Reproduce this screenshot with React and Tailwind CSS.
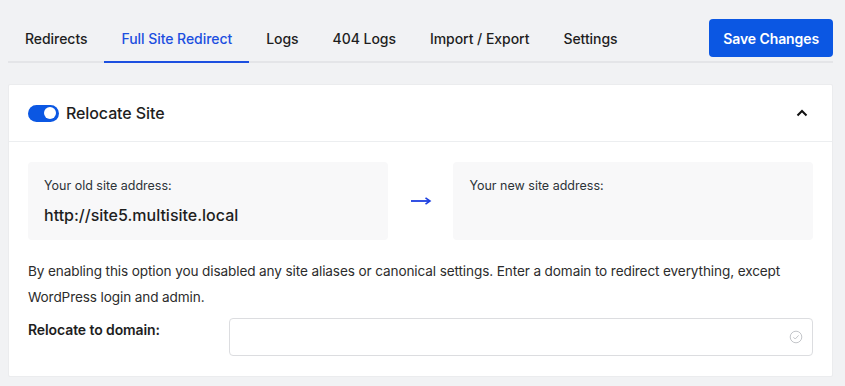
import { useState } from 'react';

const tabs = ['Redirects', 'Full Site Redirect', 'Logs', '404 Logs', 'Import / Export', 'Settings'];

function Toggle({ on, onChange }) {
    return (
        <button
            onClick={() => onChange(!on)}
            className={`relative w-[31px] h-[17px] rounded-full flex items-center px-[3px] ${on ? 'bg-[#0b57e3] justify-end' : 'bg-gray-300 justify-start'}`}
        >
            <span className="w-[12px] h-[12px] rounded-full bg-white" />
        </button>
    );
}

export default function App() {
    const [active, setActive] = useState(1);
    const [on, setOn] = useState(true);

    return (
        <div className="w-[845px] h-[386px] bg-[#f1f2f4] px-[8px] pt-[16px] overflow-hidden" style={{ fontFamily: 'Inter, "Noto Sans", sans-serif' }}>
            {/* Tabs + save */}
            <div className="flex items-start justify-between border-b-2 border-[#e4e5e8] w-[825px]">
                <div className="flex">
                    {tabs.map((t, i) => (
                        <button
                            key={t}
                            onClick={() => setActive(i)}
                            className={`px-[17px] h-[47px] -mb-[2px] flex items-center text-[14px] tracking-[-0.05px] font-medium border-b-2 ${i === active ? 'text-[#1c4fe0] border-[#1c4fe0]' : 'text-[#1e1e1e] border-transparent'}`}
                        >
                            {t}
                        </button>
                    ))}
                </div>
                <button className="mt-[3px] h-[38px] px-[14px] rounded-[4px] bg-[#0b57e3] text-white text-[14px] tracking-[-0.1px] font-semibold">
                    Save Changes
                </button>
            </div>

            {/* Card */}
            <div className="mt-[21px] w-[825px] bg-white border border-[#ebecee] rounded-[2px]">
                <div className="h-[57px] flex items-center justify-between px-[19px] border-b border-[#eceef0]">
                    <div className="flex items-center gap-[7px]">
                        <Toggle on={on} onChange={setOn} />
                        <span className="text-[16px] font-medium text-[#1e1e1e] tracking-[-0.1px]">Relocate Site</span>
                    </div>
                    <svg width="14" height="10" viewBox="0 0 14 10" className="mr-[4px]">
                        <path d="M2.5 7.5 L7 3 L11.5 7.5" fill="none" stroke="#111" strokeWidth="2" />
                    </svg>
                </div>

                <div className="px-[19px] pt-[20px] pb-[20px]">
                    <div className="flex items-stretch">
                        <div className="w-[360px] h-[78px] bg-[#f8f8f9] rounded-[4px] px-[16px] pt-[16px]">
                            <div className="text-[12.5px] text-[#2c3338] leading-[16px]">Your old site address:</div>
                            <div className="mt-[11px] text-[16px] font-medium text-[#1e1e1e] leading-[20px]">http://site5.multisite.local</div>
                        </div>
                        <div className="w-[66px] flex items-center justify-center">
                            <svg width="22" height="10" viewBox="0 0 22 10">
                                <path d="M1 5 H19" stroke="#1c3fe0" strokeWidth="1.8" />
                                <path d="M15.5 1.8 L20 5 L15.5 8.2" fill="none" stroke="#1c3fe0" strokeWidth="1.6" />
                            </svg>
                        </div>
                        <div className="w-[360px] h-[78px] bg-[#f8f8f9] rounded-[4px] px-[16px] pt-[16px]">
                            <div className="text-[12.5px] text-[#2c3338] leading-[16px]">Your new site address:</div>
                        </div>
                    </div>

                    <p className="mt-[18px] text-[13.6px] tracking-[-0.12px] leading-[26px] text-[#2c2c2c]">
                        By enabling this option you disabled any site aliases or canonical settings. Enter a domain to redirect everything, except WordPress login and admin.
                    </p>

                    <div className="mt-[8px] flex items-start">
                        <label className="w-[201px] pt-[3px] text-[14px] font-semibold text-[#1e1e1e] leading-[18px] tracking-[-0.1px]">Relocate to domain:</label>
                        <div className="relative w-[585px] h-[38px]">
                            <input className="w-full h-full border border-[#dcdde0] rounded-[4px] px-[12px] text-[14px] outline-none" />
                            <svg width="14" height="14" viewBox="0 0 14 14" className="absolute right-[10px] top-[12px]">
                                <circle cx="7" cy="7" r="5.8" fill="none" stroke="#c4c6ca" strokeWidth="1" />
                                <path d="M4.4 7.2 L6.2 9 L9.6 5.4" fill="none" stroke="#c4c6ca" strokeWidth="1" />
                            </svg>
                        </div>
                    </div>
                </div>
            </div>
        </div>
    );
}
